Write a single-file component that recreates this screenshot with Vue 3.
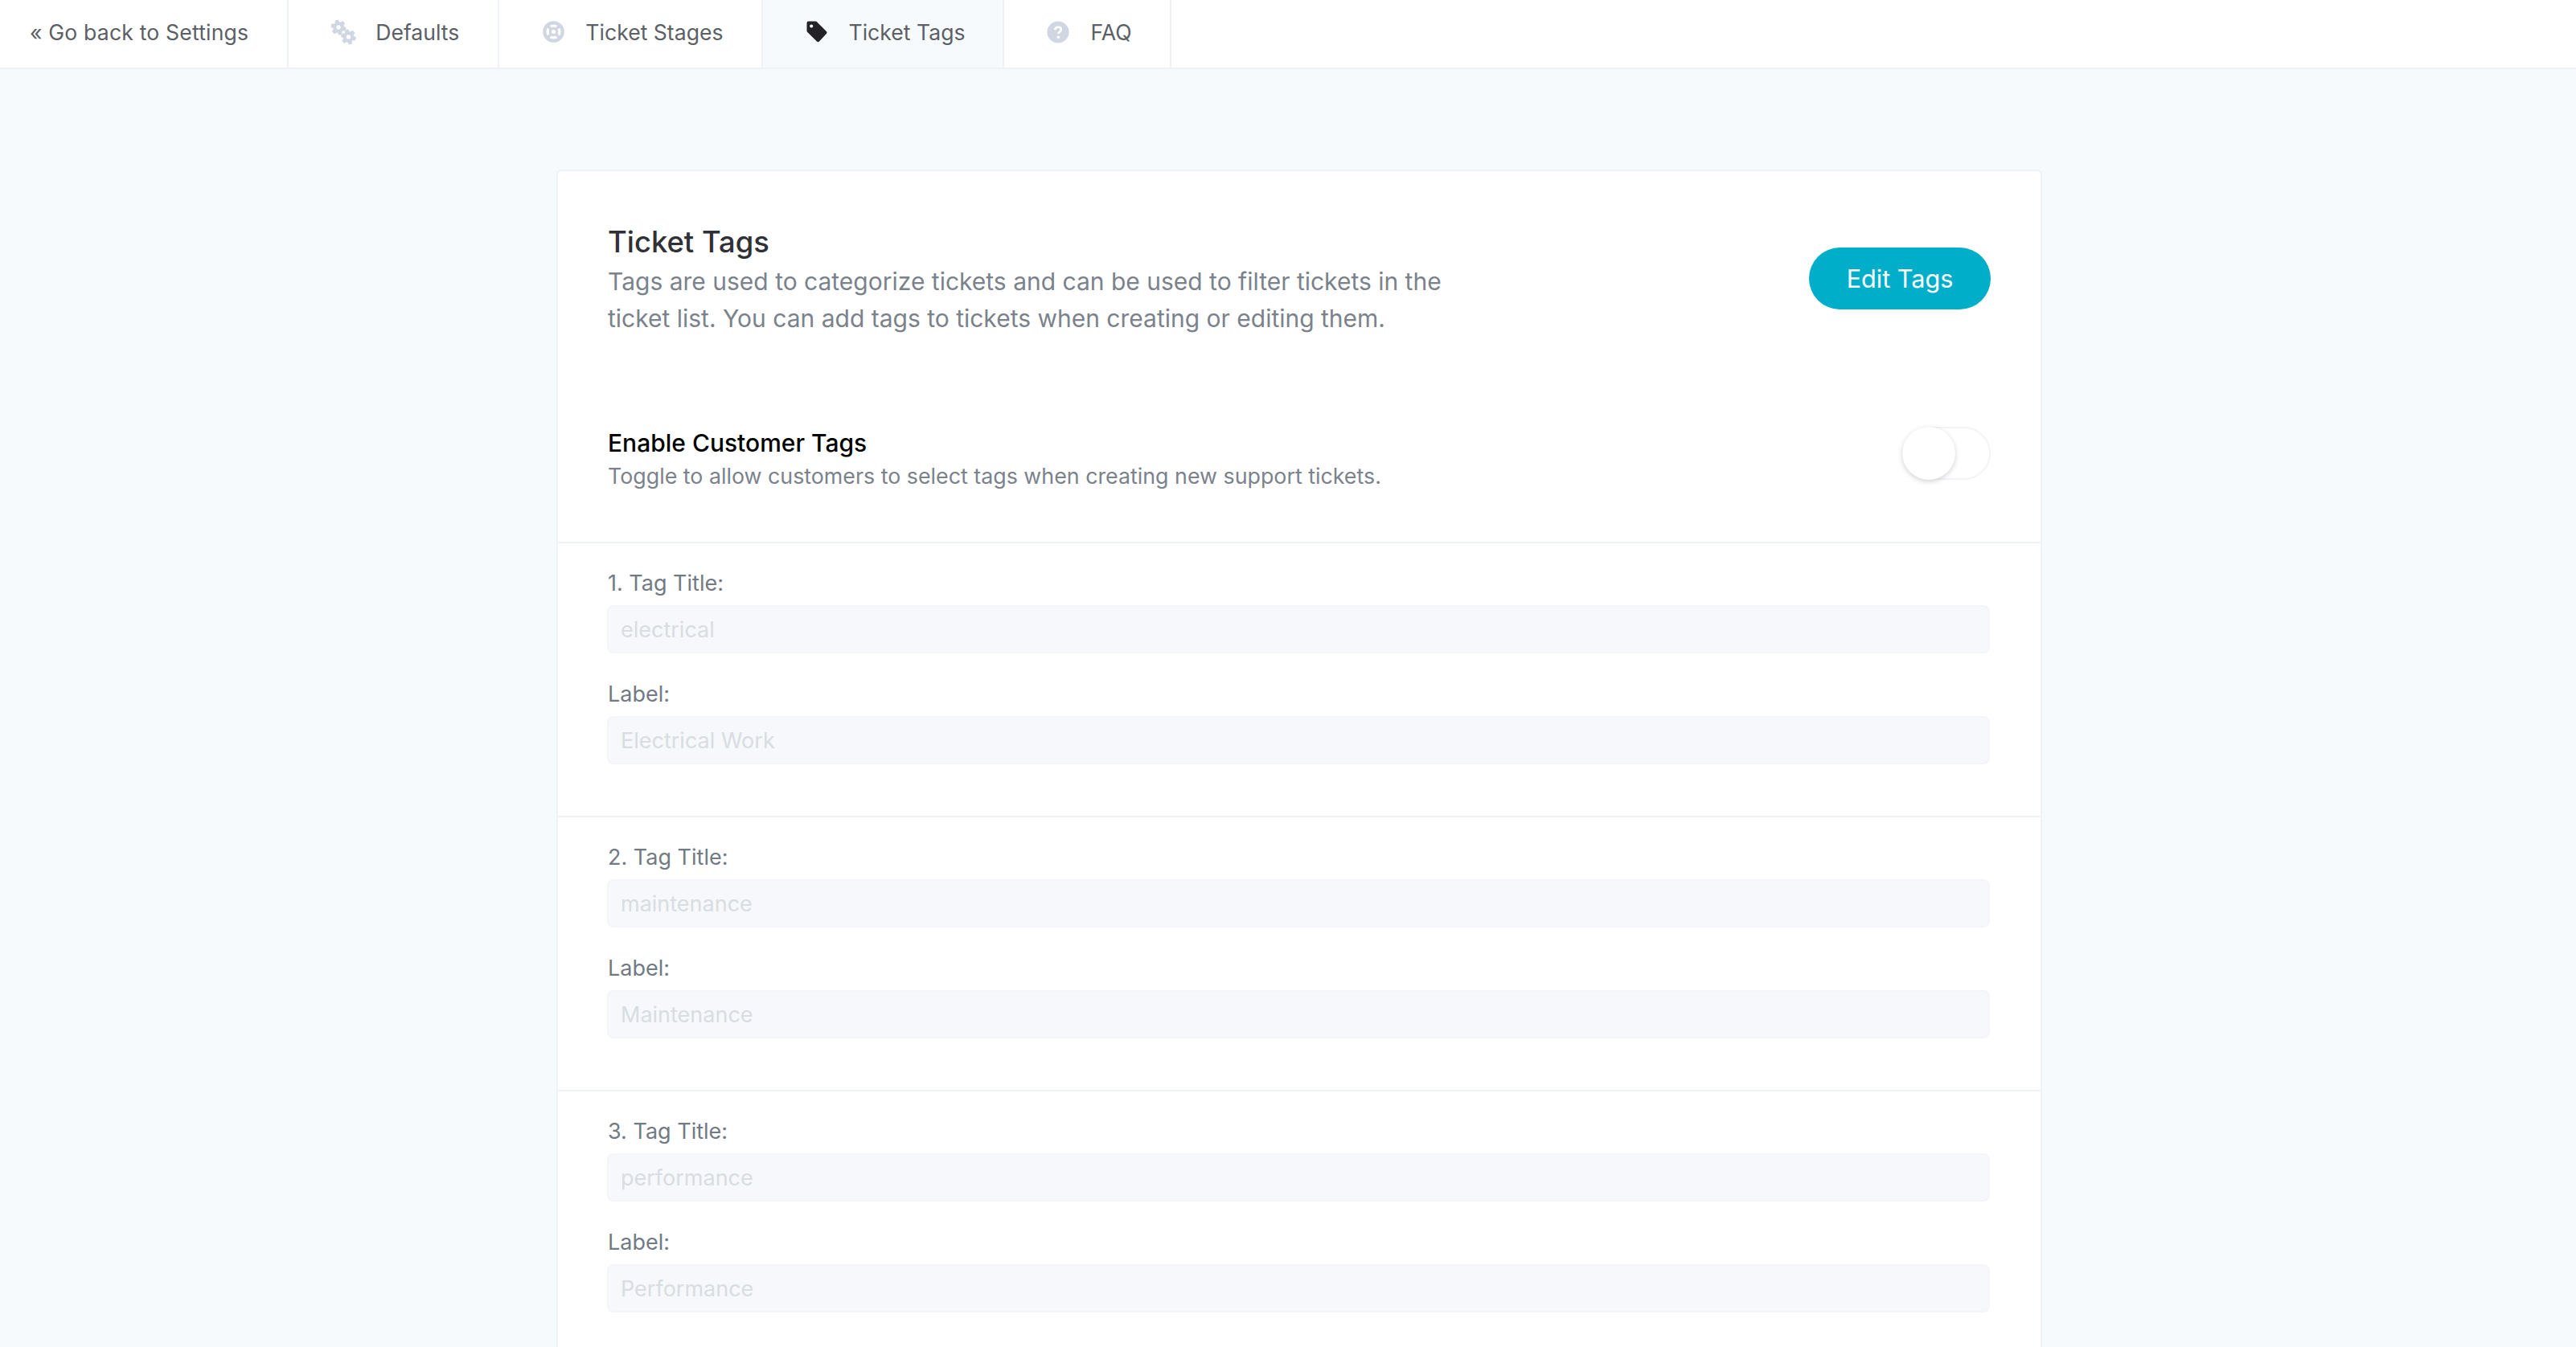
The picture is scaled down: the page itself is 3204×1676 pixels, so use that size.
<script setup>
const gear = (cx, cy, r) => {
  const teeth = 6
  const pts = []
  for (let i = 0; i < teeth; i++) {
    const a = (i / teeth) * Math.PI * 2 + 0.26
    const w = 0.3
    for (const [rad, da] of [[r * 0.7, -w - 0.14], [r, -w + 0.08], [r, w - 0.08], [r * 0.7, w + 0.14]]) {
      pts.push(`${(cx + rad * Math.cos(a + da)).toFixed(2)} ${(cy + rad * Math.sin(a + da)).toFixed(2)}`)
    }
  }
  const h = r * 0.28
  return `M${pts.join('L')}Z M${cx - h} ${cy}a${h} ${h} 0 1 0 ${h * 2} 0a${h} ${h} 0 1 0 ${-h * 2} 0Z`
}
const gearsPath = gear(11, 11, 10.5) + ' ' + gear(24.5, 24, 10.5)

const tags = [
  { n: 1, title: 'electrical', label: 'Electrical Work' },
  { n: 2, title: 'maintenance', label: 'Maintenance' },
  { n: 3, title: 'performance', label: 'Performance' },
]
</script>

<template>
  <div class="page">
    <nav class="nav">
      <a class="tab back">« Go back to Settings</a>
      <a class="tab">
        <span class="ico">
          <svg width="32" height="34" viewBox="0 0 35 35"><path :d="gearsPath" fill="#d0d7e2" fill-rule="evenodd" /></svg>
        </span>
        Defaults
      </a>
      <a class="tab">
        <span class="ico">
          <svg width="27" height="27" viewBox="0 0 27 27" fill="none" stroke="#d0d7e2">
            <circle cx="13.5" cy="13.5" r="11.2" stroke-width="4.2" />
            <circle cx="13.5" cy="13.5" r="4.2" stroke-width="3.2" />
            <path d="M5.5 5.5l5 5M21.5 5.5l-5 5M5.5 21.5l5-5M21.5 21.5l-5-5" stroke-width="3.6" />
          </svg>
        </span>
        Ticket Stages
      </a>
      <a class="tab active">
        <span class="ico">
          <svg width="26" height="27" viewBox="0 0 26 27"><path fill="#222227" fill-rule="evenodd" d="M2.6 0.6H11.5a2.5 2.5 0 0 1 1.8.8L24.8 13a2.2 2.2 0 0 1 0 3.1L16 25.6a2.2 2.2 0 0 1-3.1 0L1.3 14a2.6 2.6 0 0 1-.8-1.8V2.8A2.2 2.2 0 0 1 2.6.6ZM6.2 4.4a2.1 2.1 0 1 0 0 4.2a2.1 2.1 0 0 0 0-4.2Z" /></svg>
        </span>
        Ticket Tags
      </a>
      <a class="tab">
        <span class="ico">
          <svg width="28" height="28" viewBox="0 0 28 28">
            <circle cx="14" cy="14" r="13.6" fill="#d0d7e2" />
            <path d="M10.2 11.2c.2-2.3 1.8-3.5 3.9-3.5 2.2 0 3.8 1.3 3.8 3.1 0 1.4-.8 2.1-1.8 2.8-1.1.7-1.7 1.2-1.7 2.5" fill="none" stroke="#fff" stroke-width="2.6" />
            <circle cx="14.3" cy="20.2" r="1.8" fill="#fff" />
          </svg>
        </span>
        FAQ
      </a>
    </nav>

    <main class="card">
      <header class="head">
        <div class="head-text">
          <h1>Ticket Tags</h1>
          <p>Tags are used to categorize tickets and can be used to filter tickets in the ticket list. You can add tags to tickets when creating or editing them.</p>
        </div>
        <button class="btn" type="button">Edit Tags</button>
      </header>

      <section class="toggle-row">
        <div>
          <h2>Enable Customer Tags</h2>
          <p>Toggle to allow customers to select tags when creating new support tickets.</p>
        </div>
        <span class="toggle"><span class="thumb"></span></span>
      </section>

      <section v-for="t in tags" :key="t.n" class="tag">
        <label class="lbl">{{ t.n }}. Tag Title:</label>
        <div class="field">{{ t.title }}</div>
        <label class="lbl second">Label:</label>
        <div class="field">{{ t.label }}</div>
      </section>
    </main>
  </div>
</template>

<style>
html, body { margin: 0; overflow: hidden; }
</style>

<style scoped>
.page {
  height: 1676px;
  overflow: hidden;
  background: #f6fafd;
  font-family: Inter, "Noto Sans", sans-serif;
}
.nav {
  display: flex;
  height: 84px;
  background: #fff;
  border-bottom: 2px solid #eef2f7;
}
.tab {
  display: flex;
  align-items: center;
  padding: 0 47px 5px;
  border-right: 2px solid #eef2f7;
  font-size: 26.6px;
  color: #5c5f66;
  white-space: nowrap;
}
.tab:nth-child(2) { padding-left: 48px; padding-right: 48px; }
.back { padding-left: 37px; padding-right: 48px; letter-spacing: 0.17px; }
.active { background: #f6fafd; }
.ico {
  display: flex;
  justify-content: center;
  width: 40px;
  margin-right: 20px;
}
.card {
  width: 1848px;
  margin: 125px 0 0 692px;
  min-height: 1600px;
  box-sizing: border-box;
  background: #fff;
  border: 2px solid #eef2f7;
  border-radius: 6px;
}
.head {
  display: flex;
  justify-content: space-between;
  align-items: center;
  padding: 65px 62px 0 62px;
}
.head-text { width: 1060px; }
h1 {
  margin: 0 0 3px;
  font-size: 36.4px;
  line-height: 46px;
  font-weight: 500;
  color: #2f3038;
}
.head-text p {
  margin: 0;
  font-size: 30px;
  line-height: 46px;
  color: #7b828c;
}
.btn {
  width: 226px;
  height: 77px;
  margin-bottom: 5px;
  border: 0;
  border-radius: 40px;
  background: #00aeca;
  color: #fff;
  font: 400 30.6px Inter, sans-serif;
}
.toggle-row {
  display: flex;
  justify-content: space-between;
  align-items: flex-start;
  padding: 111px 62px 62px 62px;
  border-bottom: 2px solid #eef2f7;
}
h2 {
  margin: 0;
  font-size: 30px;
  line-height: 42px;
  font-weight: 500;
  color: #000;
}
.toggle-row p {
  margin: 0;
  font-size: 26.8px;
  line-height: 40px;
  color: #7b828c;
}
.toggle {
  position: relative;
  display: block;
  width: 110px;
  height: 66px;
  margin-top: 1px;
  box-sizing: border-box;
  border: 2px solid #f3f4f8;
  border-radius: 33px;
}
.thumb {
  position: absolute;
  left: -2px;
  top: -2px;
  width: 66px;
  height: 66px;
  border-radius: 50%;
  background: #fff;
  box-shadow: 0 2px 6px rgba(0, 0, 0, .18);
}
.tag {
  padding: 28px 63px 0 61px;
  height: 341px;
  box-sizing: border-box;
  border-bottom: 2px solid #eef2f7;
}
.lbl {
  display: block;
  padding-left: 1px;
  font-size: 27px;
  line-height: 44px;
  color: #727a84;
}
.second { margin-top: 29px; }
.field {
  box-sizing: border-box;
  height: 60px;
  margin-top: 5px;
  padding: 0 15px;
  display: flex;
  align-items: center;
  background: #f6f8fb;
  border: 2px solid #f3f5f9;
  border-radius: 8px;
  font-size: 27px;
  color: #d8dde2;
}
</style>
